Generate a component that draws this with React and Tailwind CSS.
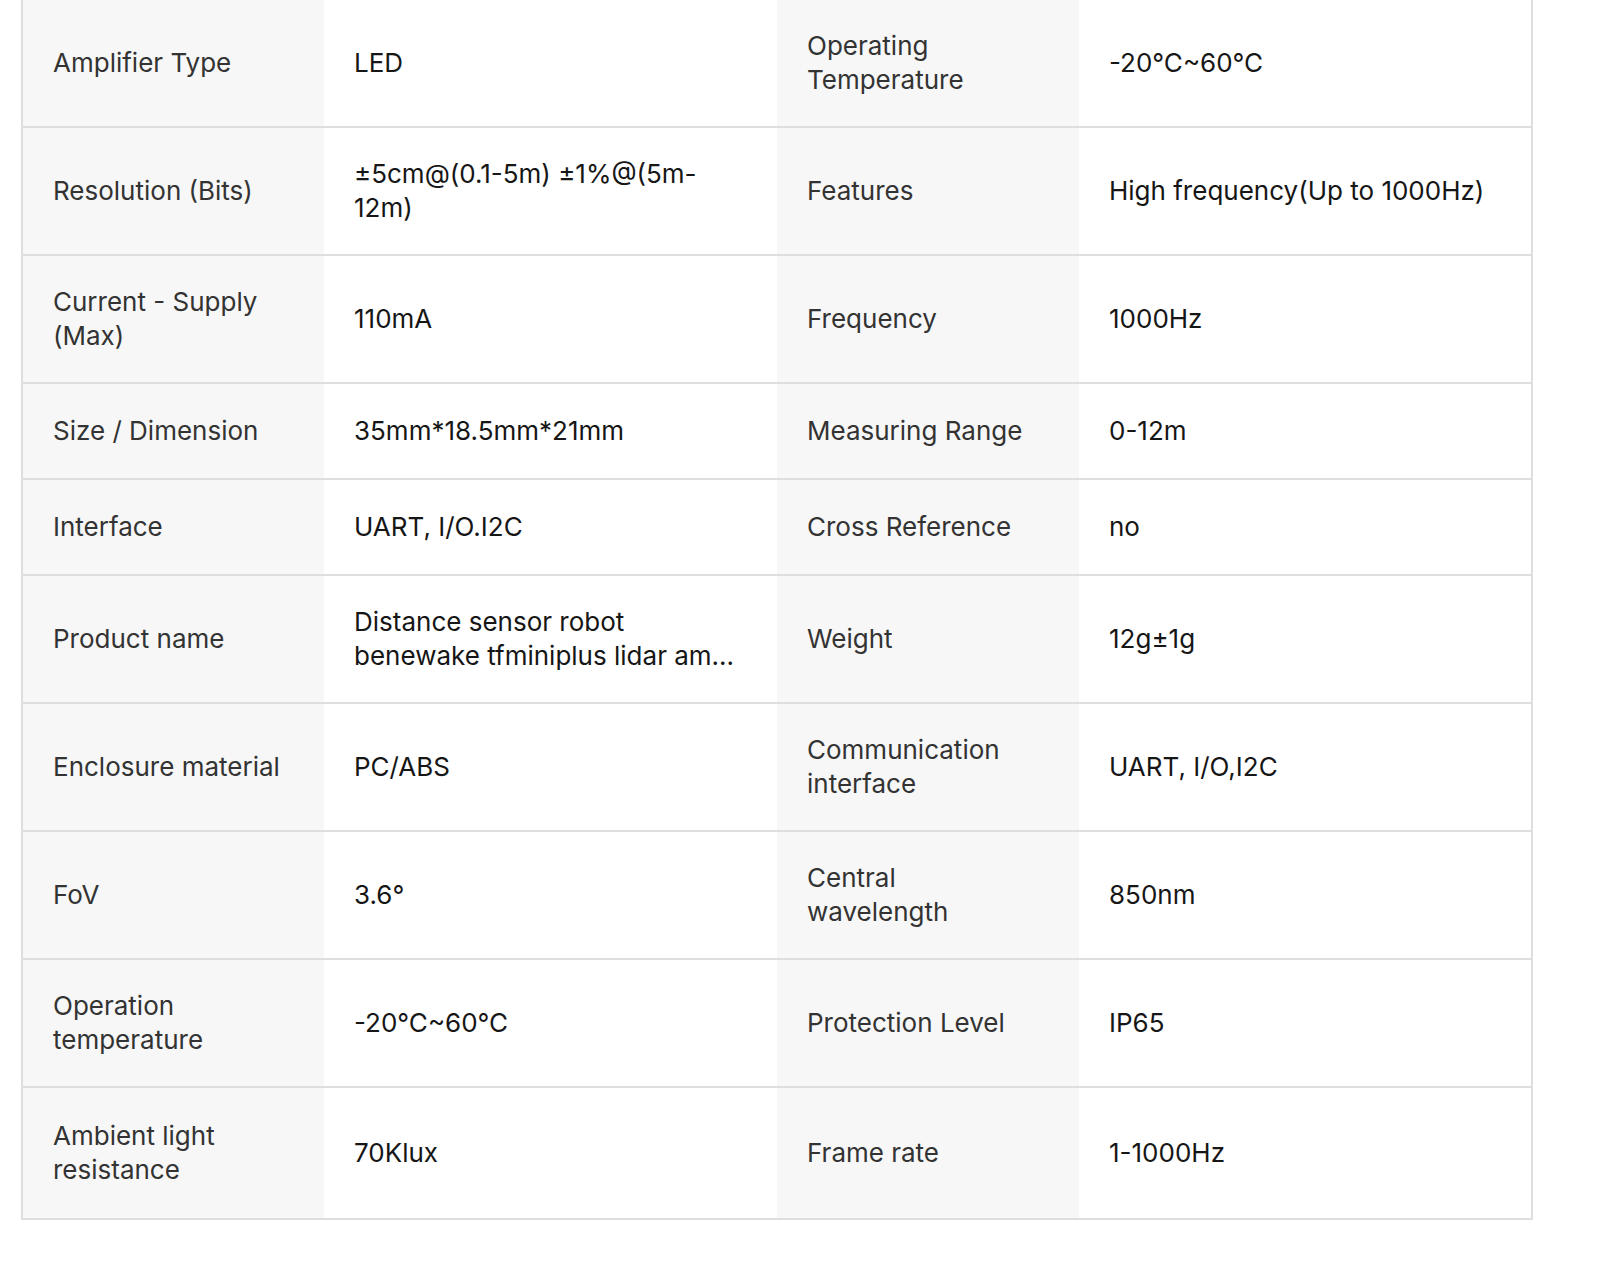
import React from "react";

const rows = [
  ["Amplifier Type", "LED", "Operating\nTemperature", "-20℃~60℃"],
  ["Resolution (Bits)", "±5cm@(0.1-5m) ±1%@(5m-\n12m)", "Features", "High frequency(Up to 1000Hz)"],
  ["Current - Supply\n(Max)", "110mA", "Frequency", "1000Hz"],
  ["Size / Dimension", "35mm*18.5mm*21mm", "Measuring Range", "0-12m"],
  ["Interface", "UART, I/O.I2C", "Cross Reference", "no"],
  ["Product name", "Distance sensor robot\nbenewake tfminiplus lidar am...", "Weight", "12g±1g"],
  ["Enclosure material", "PC/ABS", "Communication\ninterface", "UART, I/O,I2C"],
  ["FoV", "3.6°", "Central\nwavelength", "850nm"],
  ["Operation\ntemperature", "-20℃~60℃", "Protection Level", "IP65"],
  ["Ambient light\nresistance", "70Klux", "Frame rate", "1-1000Hz"],
];

const App = () => {
  return (
    <div className="w-[1600px] h-[1272px] bg-white overflow-hidden font-['Inter','Noto_Sans',sans-serif]">
      <table className="ml-[21px] mt-[-2px] w-[1510px] table-fixed border-collapse border-2 border-[#dedede] text-[26px] leading-[34px]">
        <colgroup>
          <col className="w-[302px]" />
          <col className="w-[453px]" />
          <col className="w-[302px]" />
          <col className="w-[453px]" />
        </colgroup>
        <tbody>
          {rows.map((r, i) => {
            const tall = r.some((c) => c.includes("\n"));
            const last = i === rows.length - 1;
            const h = last ? "h-[132px]" : tall ? "h-[128px]" : "h-[96px]";
            return (
              <tr key={i} className="border-t-2 border-[#dedede]">
                <td className={`${h} bg-[#f7f7f7] text-[#333] whitespace-pre px-[30px] py-0 align-middle`}>{r[0]}</td>
                <td className={`${h} bg-white text-[#161616] whitespace-pre px-[30px] py-0 align-middle`}>{r[1]}</td>
                <td className={`${h} bg-[#f7f7f7] text-[#333] whitespace-pre px-[30px] py-0 align-middle`}>{r[2]}</td>
                <td className={`${h} bg-white text-[#161616] whitespace-pre px-[30px] py-0 align-middle`}>{r[3]}</td>
              </tr>
            );
          })}
        </tbody>
      </table>
    </div>
  );
};

export default App;
